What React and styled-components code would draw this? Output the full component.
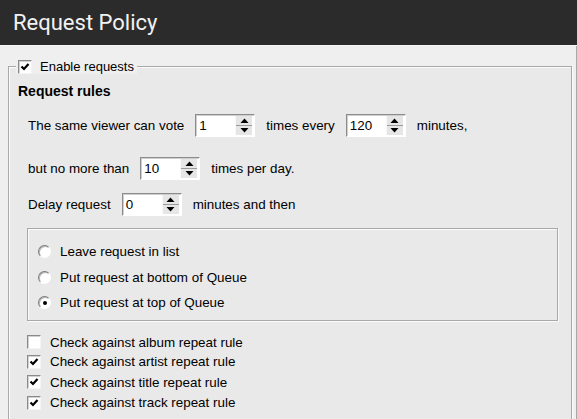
import styled, { createGlobalStyle } from "styled-components"

const GlobalStyle = createGlobalStyle`
  html, body {
    margin: 0;
    padding: 0;
    background: #efefef;
  }
  body {
    font-family: "Liberation Sans", Arial, sans-serif;
    font-size: 13.4px;
    color: #000;
  }
`

const Header = styled.div`
  height: 46px;
  background: #2b2b2b;
  border-bottom: 1px solid #f6f6f6;
  display: flex;
  align-items: center;
  padding-left: 13px;
  padding-bottom: 1px;
  box-sizing: border-box;
  color: #f2f2f2;
  font-family: Roboto, "Open Sans", sans-serif;
  font-size: 22px;
`

const Page = styled.div`
  padding: 13px 4px 0 8px;
  border-right: 1px solid #a8a8a8;
  height: 372px;
  overflow: hidden;
`

const GroupBox = styled.fieldset`
  margin: 0;
  padding: 0;
  border: 1px solid #a8a8a8;
  box-shadow: inset 1px 1px 0 #fbfbfb, 1px 1px 0 #fbfbfb;
  background: #e9e9e9;
  min-inline-size: 0;
`

const Legend = styled.legend`
  margin-left: 7px;
  padding: 0 3px 0 2px;
  display: flex;
  align-items: center;
  gap: 8px;
  line-height: 15px;
  font-size: 13px;
  background: #efefef;
`

const Content = styled.div`
  padding: 9px 13px 30px 9px;
`

const Title = styled.div`
  font-weight: bold;
  font-size: 14px;
  line-height: 16px;
`

const Row = styled.div`
  display: flex;
  align-items: center;
  gap: 11px;
  margin-top: ${p => p.$mt}px;
  margin-left: 10px;
  height: 23px;
`

const SpinBox = styled.div`
  width: 60px;
  height: 23px;
  box-sizing: border-box;
  border: 1px solid;
  border-color: #8c8c8c #ffffff #ffffff #8c8c8c;
  box-shadow: inset 1px 1px 0 #cfcfcf;
  background: #fff;
  display: flex;
  align-items: center;
  justify-content: space-between;
  padding: 1px 2px 1px 3px;
`

const SpinValue = styled.span`
  font-size: 13.4px;
  line-height: 16px;
`

const SpinButtons = styled.div`
  width: 16px;
  height: 100%;
  display: flex;
  flex-direction: column;
  background: #e6e6e6;
  border-left: 1px solid #f8f8f8;
`

const SpinHalf = styled.div`
  flex: 1;
  display: flex;
  align-items: center;
  justify-content: center;
  border-bottom: ${p => (p.$top ? "1px solid #9a9a9a" : "none")};
`

const Spinner = ({ value }) => (
  <SpinBox>
    <SpinValue>{value}</SpinValue>
    <SpinButtons>
      <SpinHalf $top>
        <svg width="9" height="5" viewBox="0 0 9 5">
          <path d="M0.5 5 L4.5 0.5 L8.5 5 Z" fill="#000" />
        </svg>
      </SpinHalf>
      <SpinHalf>
        <svg width="9" height="5" viewBox="0 0 9 5">
          <path d="M0.5 0 L4.5 4.5 L8.5 0 Z" fill="#000" />
        </svg>
      </SpinHalf>
    </SpinButtons>
  </SpinBox>
)

const Box = styled.span`
  width: 14px;
  height: 14px;
  box-sizing: border-box;
  border: 1px solid;
  border-color: #8a8a8a #f4f4f4 #f4f4f4 #8a8a8a;
  box-shadow: inset 1px 1px 0 #d2d2d2;
  background: #fff;
  display: inline-flex;
  align-items: center;
  justify-content: center;
  flex-shrink: 0;
`

const CheckBox = ({ checked }) => (
  <Box>
    {checked && (
      <svg width="10" height="10" viewBox="0 0 10 10">
        <path d="M1.5 4.5 L4 7 L8.5 2" fill="none" stroke="#000" strokeWidth="2.2" />
      </svg>
    )}
  </Box>
)

const RadioCircle = styled.span`
  width: 13px;
  height: 13px;
  box-sizing: border-box;
  border-radius: 50%;
  border: 1px solid;
  border-color: #7a7a7a #ffffff #ffffff #7a7a7a;
  box-shadow: inset 1px 1px 0 #b8b8b8;
  background: #fff;
  display: inline-flex;
  align-items: center;
  justify-content: center;
  flex-shrink: 0;
`

const Dot = styled.span`
  width: 4px;
  height: 4px;
  border-radius: 50%;
  background: #000;
`

const Panel = styled.div`
  margin: 12px 0 0 9px;
  border: 1px solid #a8a8a8;
  box-shadow: inset 1px 1px 0 #fbfbfb, 1px 1px 0 #fbfbfb;
  padding: 10px 10px 4px;
`

const Option = styled.div`
  display: flex;
  align-items: center;
  gap: 9px;
  height: 25.5px;
`

const Checks = styled.div`
  margin: 12px 0 0 9px;
  display: flex;
  flex-direction: column;
`

const CheckRow = styled.div`
  display: flex;
  align-items: center;
  gap: 9px;
  height: ${p => p.$h}px;
`

const radios = [
  { label: "Leave request in list", on: false },
  { label: "Put request at bottom of Queue", on: false },
  { label: "Put request at top of Queue", on: true },
]

const checks = [
  { label: "Check against album repeat rule", on: false, h: 19 },
  { label: "Check against artist repeat rule", on: true, h: 20 },
  { label: "Check against title repeat rule", on: true, h: 21 },
  { label: "Check against track repeat rule", on: true, h: 20 },
]

function App() {
  return (
    <>
      <GlobalStyle />
      <Header>Request Policy</Header>
      <Page>
        <GroupBox>
          <Legend>
            <CheckBox checked />
            Enable requests
          </Legend>
          <Content>
            <Title>Request rules</Title>
            <Row $mt={15}>
              The same viewer can vote
              <Spinner value="1" />
              times every
              <Spinner value="120" />
              minutes,
            </Row>
            <Row $mt={20}>
              but no more than
              <Spinner value="10" />
              times per day.
            </Row>
            <Row $mt={13}>
              Delay request
              <Spinner value="0" />
              minutes and then
            </Row>
            <Panel>
              {radios.map(r => (
                <Option key={r.label}>
                  <RadioCircle>{r.on && <Dot />}</RadioCircle>
                  {r.label}
                </Option>
              ))}
            </Panel>
            <Checks>
              {checks.map(c => (
                <CheckRow key={c.label} $h={c.h}>
                  <CheckBox checked={c.on} />
                  {c.label}
                </CheckRow>
              ))}
            </Checks>
          </Content>
        </GroupBox>
      </Page>
    </>
  )
}

export default App
